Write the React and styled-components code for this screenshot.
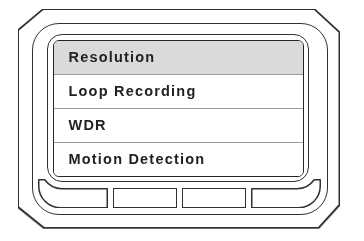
import React from "react";
import styled, { createGlobalStyle } from "styled-components";

const Global = createGlobalStyle`
  html, body { margin: 0; padding: 0; background: #fff; }
  body { font-family: "Liberation Sans", Arial, sans-serif; }
`;

const LINE = "#303030";

const Device = styled.div`
  margin: 8.5px 0 0 17.5px;
  width: 322.5px;
  height: 220px;
  filter: drop-shadow(0 1px 0.6px rgba(0, 0, 0, 0.35));
`;

const Shell = styled.div`
  box-sizing: border-box;
  width: 100%;
  height: 100%;
  padding: 1.5px;
  background: ${LINE};
  clip-path: polygon(25px 0, calc(100% - 25px) 0, 100% 23px, 100% calc(100% - 23px),
    calc(100% - 21px) 100%, 26px 100%, 0 calc(100% - 21px), 0 21px);
`;

const ShellFace = styled.div`
  box-sizing: border-box;
  width: 100%;
  height: 100%;
  background: #fff;
  padding: 12.5px 0 0 12.5px;
  clip-path: polygon(24.4px 0, calc(100% - 24.4px) 0, 100% 22.4px, 100% calc(100% - 22.4px),
    calc(100% - 20.4px) 100%, 25.4px 100%, 0 calc(100% - 20.4px), 0 20.4px);
`;

const Bezel = styled.div`
  box-sizing: border-box;
  width: 296px;
  height: 192px;
  border: 1.5px solid ${LINE};
  border-radius: 27px;
  display: flex;
  flex-direction: column;
`;

const Frame = styled.div`
  box-sizing: border-box;
  width: 262px;
  height: 148px;
  margin: 10.5px 0 0 14.5px;
  border: 1.5px solid ${LINE};
  border-radius: 15px;
  padding: 4.5px;
`;

const Screen = styled.div`
  box-sizing: border-box;
  height: 100%;
  border: 1.5px solid #262626;
  border-radius: 6px;
  overflow: hidden;
  display: flex;
  flex-direction: column;
`;

const Row = styled.div`
  flex: 1;
  display: flex;
  align-items: center;
  padding-left: 15px;
  background: ${(p) => (p.$active ? "#dadada" : "#fff")};
  border-top: ${(p) => (p.$first ? "none" : "1px solid #9c9c9c")};
  font-size: 14.5px;
  font-weight: bold;
  letter-spacing: 1.2px;
  color: #222;
`;

const Keys = styled.div`
  display: flex;
  align-items: flex-end;
  gap: 5px;
  height: 29.5px;
  margin: -3.5px 0 0 5px;
`;

const Key = styled.div`
  box-sizing: border-box;
  width: 64px;
  height: 20.5px;
  border: 1.5px solid ${LINE};
`;

const EndKeySvg = styled.svg`
  display: block;
  width: 70px;
  height: 29.5px;
  transform: ${(p) => (p.$mirror ? "scaleX(-1)" : "none")};
`;

const EndKey = ({ mirror }) => (
  <EndKeySvg $mirror={mirror} viewBox="0 0 70 29.5">
    <path
      d="M0.75 0.75 H6.8 A21.5 21.5 0 0 0 24 9.75 H69.25 V28.75 H22 A21.75 21.75 0 0 1 0.75 7.25 Z"
      fill="none"
      stroke={LINE}
      strokeWidth="1.5"
      strokeLinejoin="round"
    />
  </EndKeySvg>
);

const items = ["Resolution", "Loop Recording", "WDR", "Motion Detection"];

export default function App() {
  return (
    <>
      <Global />
      <Device>
        <Shell>
          <ShellFace>
            <Bezel>
              <Frame>
                <Screen>
                  {items.map((t, i) => (
                    <Row key={t} $first={i === 0} $active={i === 0}>
                      {t}
                    </Row>
                  ))}
                </Screen>
              </Frame>
              <Keys>
                <EndKey />
                <Key />
                <Key />
                <EndKey mirror />
              </Keys>
            </Bezel>
          </ShellFace>
        </Shell>
      </Device>
    </>
  );
}
